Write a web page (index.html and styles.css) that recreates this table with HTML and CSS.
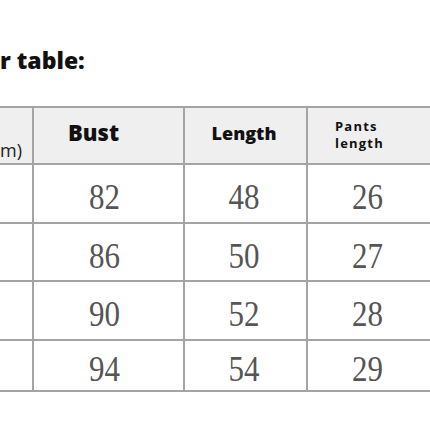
FILE: index.html
```html
<!DOCTYPE html>
<html>
<head>
<meta charset="utf-8">
<link rel="stylesheet" href="styles.css">
</head>
<body>
<div class="page">
  <h1 class="title">r table:</h1>
  <div class="grid">
    <div class="cell head first"><span class="unit">m)</span></div>
    <div class="cell head"><span class="h-big">Bust</span></div>
    <div class="cell head"><span class="h-mid">Length</span></div>
    <div class="cell head pants"><span class="h-small">Pants<br>length</span></div>

    <div class="cell"></div>
    <div class="cell num c-bust"><span>82</span></div>
    <div class="cell num c-len"><span>48</span></div>
    <div class="cell num c-pants"><span>26</span></div>

    <div class="cell"></div>
    <div class="cell num c-bust"><span>86</span></div>
    <div class="cell num c-len"><span>50</span></div>
    <div class="cell num c-pants"><span>27</span></div>

    <div class="cell"></div>
    <div class="cell num c-bust"><span>90</span></div>
    <div class="cell num c-len"><span>52</span></div>
    <div class="cell num c-pants"><span>28</span></div>

    <div class="cell"></div>
    <div class="cell num c-bust"><span>94</span></div>
    <div class="cell num c-len"><span>54</span></div>
    <div class="cell num c-pants"><span>29</span></div>
  </div>
</div>
</body>
</html>
```

FILE: styles.css
```css
html, body {
  margin: 0;
  padding: 0;
  background: #ffffff;
  overflow: hidden;
}
.page {
  width: 430px;
  height: 430px;
  overflow: hidden;
  padding-top: 45px;
  box-sizing: border-box;
}
.title {
  margin: 0 0 31px 0;
  font-family: "Open Sans", "Liberation Sans", sans-serif;
  font-weight: 800;
  font-size: 23px;
  line-height: 30px;
  height: 30px;
  color: #111;
}
.grid {
  display: grid;
  grid-template-columns: 32px 149px 121px 140px;
  grid-template-rows: 55px 57px 56px 57px 49px;
  gap: 2px;
  padding: 2px 0;
  background: #a4a4a4;
  width: 450px;
}
.cell {
  background: #ffffff;
  display: flex;
  align-items: center;
  justify-content: center;
  box-sizing: border-box;
}
.head {
  background: #efefef;
  font-family: "Open Sans", "Liberation Sans", sans-serif;
  font-weight: 800;
  color: #111;
}
.first {
  justify-content: flex-start;
  align-items: flex-end;
}
.unit {
  font-weight: 400;
  font-size: 18px;
  line-height: 20px;
  color: #222;
  padding-bottom: 3px;
}
.h-big {
  font-size: 22px;
  margin-right: 30px;
  margin-top: -7px;
}
.h-mid {
  font-size: 18px;
  margin-left: -3px;
  margin-top: -5px;
}
.pants {
  justify-content: flex-start;
  padding-left: 27px;
}
.h-small {
  font-size: 13px;
  font-weight: 700;
  line-height: 17px;
  letter-spacing: 1.2px;
  margin-top: -2px;
}
.num {
  font-family: "Liberation Serif", "DejaVu Serif", serif;
  font-size: 31px;
  color: #555;
  padding-top: 7px;
}
.num span {
  display: inline-block;
  transform: scaleY(1.18);
}
.c-bust { padding-right: 8px; }
.c-len { padding-right: 3px; }
.c-pants { padding-right: 21px; }
```
